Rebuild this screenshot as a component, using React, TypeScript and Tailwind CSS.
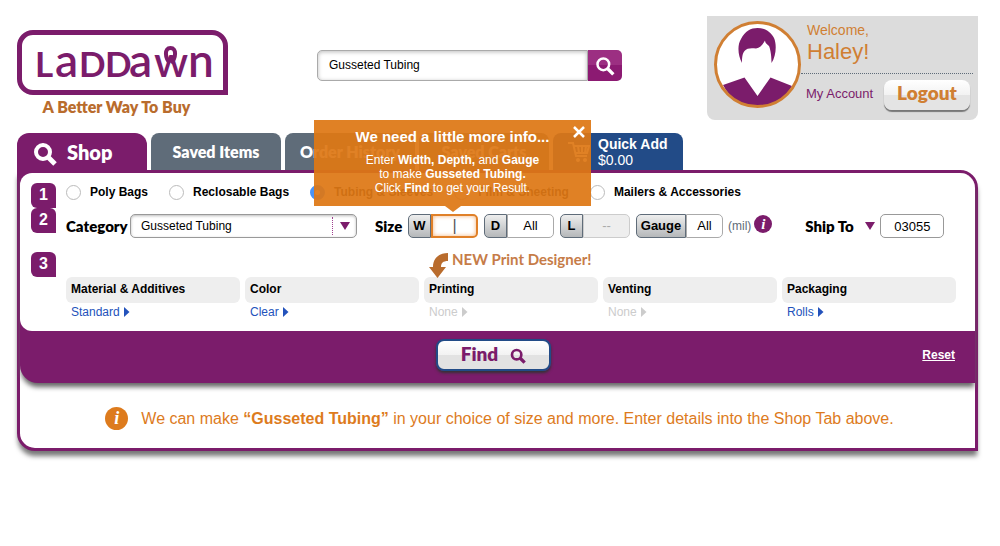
import { useState } from "react";
import { clsx } from "clsx";

const TABS = [
  { id: "saved", label: "Saved Items" },
  { id: "history", label: "Order History" },
  { id: "carts", label: "Saved Carts" },
];

const PRODUCTS = ["Poly Bags", "Reclosable Bags", "Tubing & Sleeves", "Film & Sheeting", "Mailers & Accessories"];

const OPTIONS = [
  { title: "Material & Additives", value: "Standard", enabled: true },
  { title: "Color", value: "Clear", enabled: true },
  { title: "Printing", value: "None", enabled: false, promo: true },
  { title: "Venting", value: "None", enabled: false },
  { title: "Packaging", value: "Rolls", enabled: true },
];

export default function App() {
  const [product, setProduct] = useState("Tubing & Sleeves");
  const [tipOpen, setTipOpen] = useState(true);

  return (
    <div className="bg-white pt-4 pr-[22px] pb-5 pl-[17px] font-['Liberation_Sans',Arial,sans-serif] text-[12px] leading-4 text-black">
      <header className="flex items-start">
        <Logo />
        <SearchBox />
        <UserPanel />
      </header>

      <nav className="mt-[13px] flex items-end gap-1 font-['Lato',sans-serif] font-extrabold text-white">
        <button className="flex h-[37px] w-[130px] items-center gap-[10px] rounded-t-xl bg-[#7b1c6b] pl-4 text-[20px]">
          <Magnifier className="mt-1 size-6" stroke={4} /> Shop
        </button>
        {TABS.map((t) => (
          <button key={t.id} className="h-[37px] w-[130px] rounded-t-lg bg-[#5f6c79] text-[16px]">
            {t.label}
          </button>
        ))}
        <button className="flex h-[37px] w-[130px] items-center gap-2 rounded-t-lg bg-[#224b87] pl-[15px] text-left font-['Liberation_Sans',Arial,sans-serif] text-[14px] font-bold">
          <Cart />
          <span>
            Quick Add
            <span className="block font-normal">$0.00</span>
          </span>
        </button>
      </nav>

      <main className="rounded-tr-[18px] rounded-bl-[18px] border-[3px] border-[#7b1c6b] bg-white shadow-[0_6px_5px_-1px_#777]">
        <form
          onSubmit={(e) => e.preventDefault()}
          className="rounded-tr-[15px] rounded-bl-[18px] bg-[#7b1c6b] shadow-[0_5px_5px_-1px_#666]"
        >
          <div className="rounded-tl-xl rounded-tr-[15px] rounded-bl-xl bg-white pt-[10px] pr-[19px] pb-[10px] pl-[11px]">
            <div className="flex gap-[10px]">
              <Step n={1} />
              <div className="flex h-[18px] items-center gap-[21px] font-bold">
                {PRODUCTS.map((p) => (
                  <label key={p} className="flex items-center gap-[9px]">
                    <input
                      type="radio"
                      name="product"
                      checked={product === p}
                      onChange={() => setProduct(p)}
                      className="size-[15px] appearance-none rounded-full border border-[#bbb] bg-white checked:border-[5px] checked:border-[#4a93f5]"
                    />
                    {p}
                  </label>
                ))}
              </div>
            </div>

            <div className="flex gap-[10px]">
              <Step n={2} />
              <div className="flex flex-1 items-center pt-[6px]">
                <label htmlFor="category" className="w-16 font-['Lato',sans-serif] text-[15px] font-extrabold">
                  Category
                </label>
                <div className="relative w-[227px]">
                  <select
                    id="category"
                    className="block h-6 w-full appearance-none rounded-[5px] border border-[#999] bg-white px-[10px] shadow-[inset_0_1px_3px_#bbb]"
                  >
                    <option>Gusseted Tubing</option>
                  </select>
                  <span className="pointer-events-none absolute inset-y-[3px] right-[7px] flex items-center border-l border-dotted border-[#a0408f] pl-[7px]">
                    <DownArrow />
                  </span>
                </div>
                <span className="ml-[18px] w-[33px] font-['Lato',sans-serif] text-[15px] font-extrabold">Size</span>
                <div className="relative">
                  <Field id="width" label="W" active />
                  {tipOpen && <InfoTip onClose={() => setTipOpen(false)} />}
                </div>
                <Field id="depth" label="D" value="All" className="ml-[6px]" />
                <Field id="length" label="L" value="--" disabled className="ml-[6px]" />
                <Field id="gauge" label="Gauge" value="All" wide className="ml-[6px]" />
                <span className="ml-[5px] text-[#5f6c79]">(mil)</span>
                <button
                  type="button"
                  aria-label="Gauge help"
                  className="mb-1 ml-[3px] size-[18px] rounded-full bg-[#7b1c6b] font-['Liberation_Serif',serif] text-[15px] leading-[18px] font-bold text-white italic"
                >
                  i
                </button>
                <label htmlFor="zip" className="ml-[33px] w-[51px] font-['Lato',sans-serif] text-[15px] font-extrabold whitespace-nowrap">
                  Ship To
                </label>
                <span className="ml-[9px]">
                  <DownArrow />
                </span>
                <input
                  id="zip"
                  defaultValue="03055"
                  className="ml-[5px] h-6 w-16 rounded-[5px] border border-[#999] text-center text-[13px]"
                />
              </div>
            </div>

            <div className="mt-[14px] flex gap-[10px]">
              <Step n={3} />
              <div className="grid flex-1 grid-cols-5 gap-[5px] pt-[25px]">
                {OPTIONS.map((o) => (
                  <div key={o.title} className="relative">
                    <h3 className="rounded-md bg-[#eee] px-[5px] pt-[3px] pb-[5px] leading-[18px] font-bold">{o.title}</h3>
                    <button
                      type="button"
                      disabled={!o.enabled}
                      className={clsx(
                        "flex items-center gap-1 px-[5px] leading-[18px]",
                        o.enabled ? "text-[#2352bb]" : "text-[#ccc]"
                      )}
                    >
                      {o.value}
                      <svg viewBox="0 0 6 10" className="h-[10px] w-[6px]" fill="currentColor">
                        <path d="M0 0L5.500 5L0 10Z" />
                      </svg>
                    </button>
                    {o.promo && <PrintPromo />}
                  </div>
                ))}
              </div>
            </div>
          </div>

          <div className="grid h-[52px] grid-cols-3 items-center pr-[20px] pb-1 pl-3">
            <button
              type="submit"
              className="col-start-2 flex h-8 w-[115px] items-center justify-center gap-3 justify-self-center rounded-lg border-2 border-[#224b87] bg-[linear-gradient(#fff,#f2f2f2_50%,#e2e2e2_50%)] pb-[2px] font-['Lato',sans-serif] text-[19px] font-extrabold text-[#7b1c6b] shadow-[0_2px_3px_#333]"
            >
              Find
              <Magnifier className="mt-[3px] size-4" stroke={4} />
            </button>
            <button type="reset" className="justify-self-end font-bold text-white underline">
              Reset
            </button>
          </div>
        </form>

        <p className="flex h-[65px] items-center justify-center gap-[13px] pt-[6px] pl-1 text-[16px] text-[#dd7b1d]">
          <span className="size-[23px] rounded-full bg-[#dd7b1d] text-center font-['Liberation_Serif',serif] text-[18px] leading-[23px] font-bold text-white italic">
            i
          </span>
          <span>
            We can make <b>“Gusseted Tubing”</b> in your choice of size and more. Enter details into the Shop Tab above.
          </span>
        </p>
      </main>
    </div>
  );
}

function Logo() {
  return (
    <a href="#" className="mt-[14px] block w-[211px]">
      <span className="flex h-[65px] items-center justify-center rounded-tl-2xl rounded-tr-2xl rounded-bl-2xl border-[5px] border-[#7b1c6b]">
        <svg viewBox="0 -6 180 55" className="h-[55px] w-[180px] overflow-visible" fill="#7b1c6b" fontFamily="Lato, sans-serif">
          <text y="36" fontSize="35" fontWeight="700">
            <tspan x="2">L</tspan>
            <tspan x="46">D</tspan>
            <tspan x="72">D</tspan>
          </text>
          <text y="36" fontSize="46" fontWeight="600">
            <tspan x="22">a</tspan>
            <tspan x="96">a</tspan>
            <tspan x="155">n</tspan>
          </text>
          <text x="121" y="36" fontSize="43" fontWeight="600">
            w
          </text>
          <path d="M137 22C132 17 131 7 137.500 7C144 7 143 17 138 22" fill="none" stroke="#7b1c6b" strokeWidth="4" />
        </svg>
      </span>
      <span className="mt-[2px] block pr-3 text-center font-['Lato',sans-serif] text-[16px] leading-5 font-extrabold text-[#b96c2d]">
        A Better Way To Buy
      </span>
    </a>
  );
}

function SearchBox() {
  return (
    <form role="search" onSubmit={(e) => e.preventDefault()} className="mt-[34px] ml-[89px] flex h-[31px] w-[305px]">
      <input
        aria-label="Search"
        defaultValue="Gusseted Tubing"
        className="min-w-0 flex-1 rounded-l-[5px] border border-[#aaa] px-[11px] pb-[2px] shadow-[inset_0_1px_4px_#bbb]"
      />
      <button
        aria-label="Search"
        className="flex w-[34px] items-center justify-center rounded-r-[5px] bg-linear-to-b from-[#9c2f82] from-50% to-[#8c1a72] to-50% text-white"
      >
        <Magnifier className="size-5" stroke={3} />
      </button>
    </form>
  );
}

function UserPanel() {
  return (
    <section className="ml-auto flex h-[104px] w-[271px] rounded-b-lg bg-[#dcdcdc] pt-[5px] pr-[5px] pl-[7px]">
      <svg viewBox="0 0 87 87" className="size-[87px] shrink-0">
        <circle cx="43.500" cy="43.500" r="42" fill="#fff" />
        <path
          d="M28 42C24 35 23 24 27 18C31 10 37 7 43.500 7C51 7 57 11 60 17C63 24 62 35 57.500 42C57.500 33 56 27 55 25C53 23 51 22 51 19.500C49 23 46 27 42 27.500C37 27 33 27 30.500 30C28 33 28 38 28 42Z"
          fill="#7b1c6b"
        />
        <path d="M9 64L30.500 56.500L43.500 75L56.500 56.500L78 65C71 78 59 86 43.500 86C28 86 16 78 9 64Z" fill="#7b1c6b" />
        <circle cx="43.500" cy="43.500" r="42" fill="none" stroke="#d07f33" strokeWidth="3" />
      </svg>
      <div className="min-w-0 flex-1">
        <p className="h-[53px] border-b border-dotted border-[#5f6c79] pl-[6px] text-[14px] leading-[18px] text-[#d07f33]">
          Welcome,
          <strong className="block text-[22px] leading-[26px] font-normal">Haley!</strong>
        </p>
        <div className="flex items-center justify-between pt-[6px] pr-[3px] pl-[5px]">
          <a href="#account" className="pb-[2px] text-[13px] text-[#7b1c6b]">
            My Account
          </a>
          <button className="h-[30px] w-[86px] rounded-lg bg-[linear-gradient(#fff,#f2f2f2_50%,#e4e4e4_50%)] pb-1 font-['Lato',sans-serif] text-[19px] font-extrabold text-[#d07f33] shadow-[0_2px_1px_#777]">
            Logout
          </button>
        </div>
      </div>
    </section>
  );
}

function Step({ n }: { n: number }) {
  return (
    <span className="size-[25px] shrink-0 rounded-tl-md rounded-tr-md rounded-bl-md bg-[#7b1c6b] text-center text-[16px] leading-[23px] font-bold text-white">
      {n}
    </span>
  );
}

function Field({ id, label, value, active, disabled, wide, className }: {
  id: string;
  label: string;
  value?: string;
  active?: boolean;
  disabled?: boolean;
  wide?: boolean;
  className?: string;
}) {
  return (
    <div className={clsx("flex h-6", className)}>
      <label
        htmlFor={id}
        className={clsx(
          "rounded-l-[5px] border border-[#5f6c79] bg-linear-to-b from-[#eee] to-[#b5b8ba] text-center text-[13px] leading-[22px] font-bold",
          wide ? "w-[50px]" : "w-[23px]"
        )}
      >
        {label}
      </label>
      <input
        id={id}
        defaultValue={value}
        placeholder={active ? "|" : undefined}
        disabled={disabled}
        className={clsx(
          "rounded-r-[5px] border text-center text-[13px]",
          wide ? "w-[37px]" : "w-[47px]",
          active && "border-2 border-[#e08028] text-[16px] shadow-[inset_0_0_4px_#f3b27b] placeholder:text-[#555]",
          disabled && "border-[#ccc] bg-[#eee] text-[#aaa]",
          !active && !disabled && "border-[#aaa] bg-white"
        )}
      />
    </div>
  );
}

function InfoTip({ onClose }: { onClose: () => void }) {
  return (
    <div
      role="dialog"
      className="absolute bottom-[32px] left-[-94px] z-10 h-[86px] w-[277px] bg-[#de7714]/93 pt-2 text-center leading-[14px] text-white"
    >
      <h2 className="mb-[7px] text-[15px] leading-[18px] font-bold">We need a little more info...</h2>
      <p>
        Enter <b>Width, Depth,</b> and <b>Gauge</b>
        <br />
        to make <b>Gusseted Tubing.</b>
        <br />
        Click <b>Find</b> to get your Result.
      </p>
      <button type="button" aria-label="Close" onClick={onClose} className="absolute top-[6px] right-[6px]">
        <svg viewBox="0 0 12 12" className="size-3" stroke="currentColor" strokeWidth="2.500">
          <path d="M1 1L11 11M11 1L1 11" />
        </svg>
      </button>
      <svg viewBox="0 0 16 6" className="absolute top-full left-[131px] h-[6px] w-4" fill="#de7714" fillOpacity="0.930">
        <path d="M0 0H16L8 6Z" />
      </svg>
    </div>
  );
}

function PrintPromo() {
  return (
    <span className="pointer-events-none absolute bottom-[42px] left-1 flex items-start gap-[2px] whitespace-nowrap">
      <svg viewBox="0 0 22 28" className="h-7 w-[22px]" fill="#b96c2d">
        <path d="M20 2V10C15 10 13 12 13 16H18L9.500 27L1 16H5C5 7 11 2 20 2Z" />
      </svg>
      <span className="font-['Lato',sans-serif] text-[15px] font-bold text-[#c67c48]">NEW Print Designer!</span>
    </span>
  );
}

function Magnifier({ className, stroke }: { className?: string; stroke: number }) {
  return (
    <svg viewBox="0 0 24 24" className={className} fill="none" stroke="currentColor" strokeWidth={stroke}>
      <circle cx="10" cy="10" r="7" />
      <path d="M15 15L22 22" strokeWidth={stroke + 1} />
    </svg>
  );
}

function DownArrow() {
  return (
    <svg viewBox="0 0 10 8" className="h-2 w-[10px]" fill="#7b1c6b">
      <path d="M0 0H10L5 8Z" />
    </svg>
  );
}

function Cart() {
  return (
    <svg viewBox="0 0 22 22" className="size-[22px]" fill="none" stroke="currentColor" strokeWidth="2">
      <path d="M0 2H5L8 15H19M6 5H21L19 12H8M10 5L11 12M14 5V12M18 5L17 12" />
      <circle cx="10" cy="19" r="1" />
      <circle cx="17" cy="19" r="1" />
    </svg>
  );
}
